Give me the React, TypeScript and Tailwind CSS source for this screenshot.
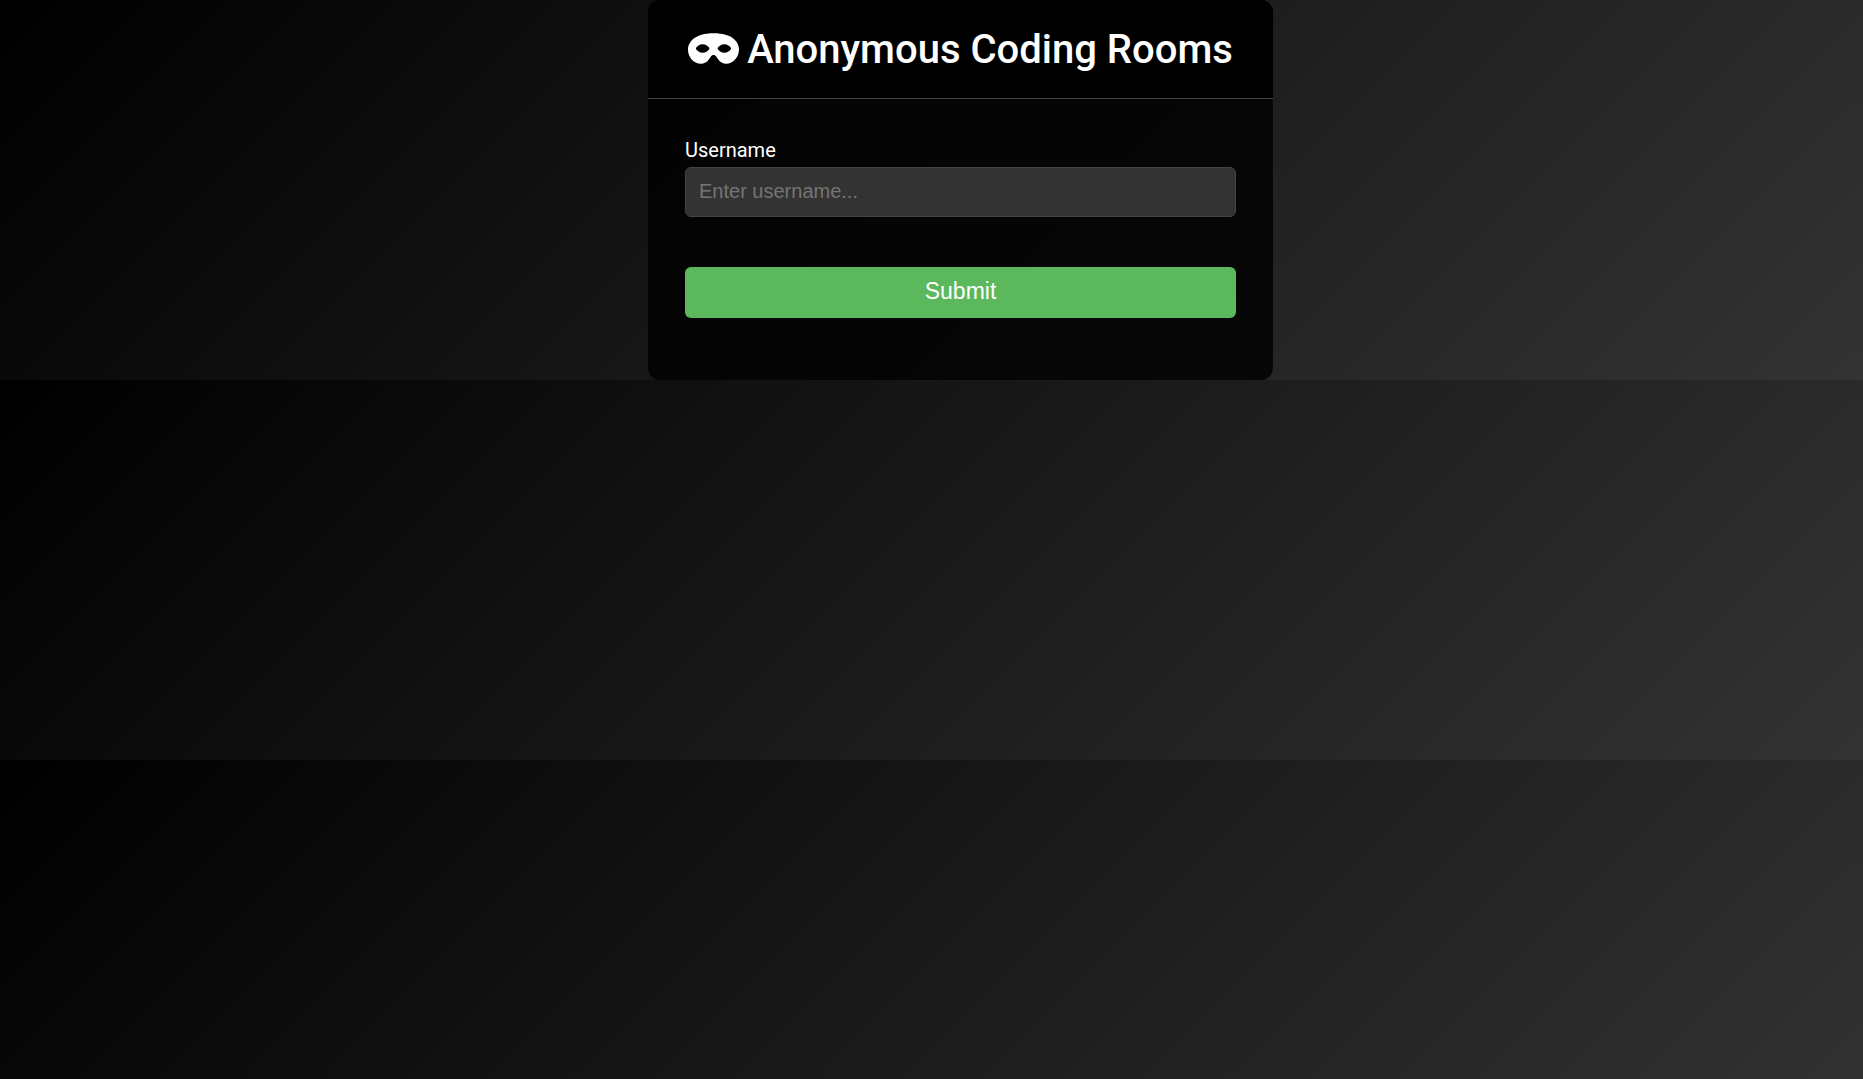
import { useState } from "react";
import { FaMask } from "react-icons/fa";

export default function App() {
  const [name, setName] = useState("");
  return (
    <div className="min-h-screen bg-[linear-gradient(135deg,#000,#333)] bg-[length:100%_380px] pl-[58px] font-[Roboto,sans-serif] text-white">
      <main className="mx-auto max-w-[625px] overflow-hidden rounded-xl bg-black/80">
        <header className="flex items-center justify-center gap-2 border-b border-[#444] bg-black px-6 pt-[25px] pb-[23px]">
          <FaMask className="-mt-1 h-[41px] w-[51px]" aria-hidden="true" />
          <h1 className="text-[40px] leading-[50px] font-medium">Anonymous Coding Rooms</h1>
        </header>
        <form className="flex flex-col px-[37px] pt-10 pb-[62px]" onSubmit={(e) => e.preventDefault()}>
          <label htmlFor="username" className="mb-1.5 text-xl leading-[22px]">Username</label>
          <input
            id="username"
            value={name}
            onChange={(e) => setName(e.target.value)}
            placeholder="Enter username..."
            className="h-[50px] rounded-md border border-[#444] bg-[#333] px-[13px] pb-0.5 font-['Liberation_Sans',sans-serif] text-xl placeholder:text-[#757575]"
          />
          <button
            type="submit"
            className="mt-[50px] h-[51px] rounded-md bg-[#5cb85c] pb-0.5 font-['Liberation_Sans',sans-serif] text-[23px]"
          >
            Submit
          </button>
        </form>
      </main>
    </div>
  );
}
